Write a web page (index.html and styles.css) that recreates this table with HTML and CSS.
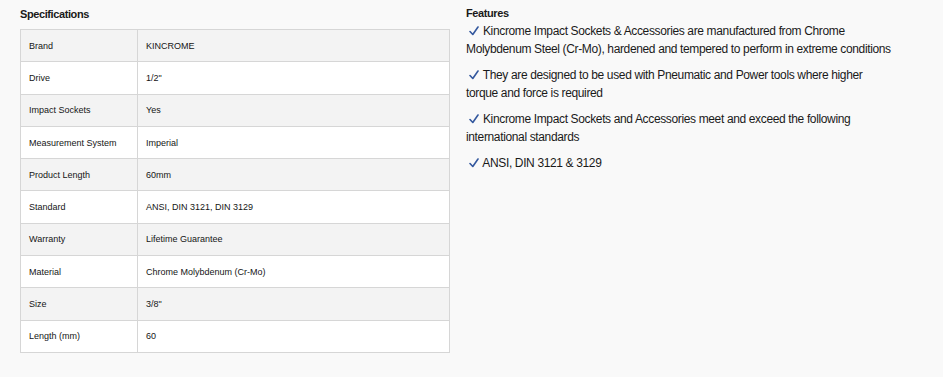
FILE: index.html
```html
<!DOCTYPE html>
<html>
<head>
<meta charset="utf-8">
<link rel="stylesheet" href="styles.css">
</head>
<body>
<div class="page">
  <section class="specs">
    <h2 class="title">Specifications</h2>
    <table class="spec-table">
      <tr><td class="k">Brand</td><td>KINCROME</td></tr>
      <tr><td class="k">Drive</td><td>1/2"</td></tr>
      <tr><td class="k">Impact Sockets</td><td>Yes</td></tr>
      <tr><td class="k">Measurement System</td><td>Imperial</td></tr>
      <tr><td class="k">Product Length</td><td>60mm</td></tr>
      <tr><td class="k">Standard</td><td>ANSI, DIN 3121, DIN 3129</td></tr>
      <tr><td class="k">Warranty</td><td>Lifetime Guarantee</td></tr>
      <tr><td class="k">Material</td><td>Chrome Molybdenum (Cr-Mo)</td></tr>
      <tr><td class="k">Size</td><td>3/8"</td></tr>
      <tr><td class="k">Length (mm)</td><td>60</td></tr>
    </table>
  </section>
  <section class="features">
    <h2 class="title">Features</h2>
    <p><svg class="tick" viewBox="0 0 10 10" width="10" height="10"><path d="M1 5.5 L3.8 8.5 L9 1" fill="none" stroke="#34589e" stroke-width="1.6" stroke-linecap="round" stroke-linejoin="round"/></svg> Kincrome Impact Sockets &amp; Accessories are manufactured from Chrome Molybdenum Steel (Cr-Mo), hardened and tempered to perform in extreme conditions</p>
    <p><svg class="tick" viewBox="0 0 10 10" width="10" height="10"><path d="M1 5.5 L3.8 8.5 L9 1" fill="none" stroke="#34589e" stroke-width="1.6" stroke-linecap="round" stroke-linejoin="round"/></svg> They are designed to be used with Pneumatic and Power tools where higher torque and force is required</p>
    <p><svg class="tick" viewBox="0 0 10 10" width="10" height="10"><path d="M1 5.5 L3.8 8.5 L9 1" fill="none" stroke="#34589e" stroke-width="1.6" stroke-linecap="round" stroke-linejoin="round"/></svg> Kincrome Impact Sockets and Accessories meet and exceed the following international standards</p>
    <p><svg class="tick" viewBox="0 0 10 10" width="10" height="10"><path d="M1 5.5 L3.8 8.5 L9 1" fill="none" stroke="#34589e" stroke-width="1.6" stroke-linecap="round" stroke-linejoin="round"/></svg> ANSI, DIN 3121 &amp; 3129</p>
  </section>
</div>
</body>
</html>
```

FILE: styles.css
```css
html, body {
  margin: 0;
  padding: 0;
  background: #f9f9f9;
  color: #1a1a1a;
  font-family: "Liberation Sans", Arial, sans-serif;
}
.page {
  display: grid;
  grid-template-columns: 430px 429px;
  column-gap: 16px;
  padding: 0 20px;
}
.title {
  font-size: 11px;
  font-weight: bold;
  margin: 0;
  line-height: 14px;
  letter-spacing: -0.4px;
}
.specs .title {
  padding-top: 7px;
  margin-bottom: 8px;
}
.spec-table {
  width: 430px;
  border-collapse: collapse;
  border: 1px solid #d6d6d6;
  font-size: 9px;
  background: #fff;
  color: #151515;
}
.spec-table td {
  height: 31.3px;
  padding: 0 8px;
  border-top: 1px solid #d6d6d6;
  border-bottom: 1px solid #d6d6d6;
  vertical-align: middle;
}
.spec-table td.k {
  width: 100px;
  border-right: 1px solid #d6d6d6;
}
.spec-table tr:nth-child(odd) td {
  background: #f3f3f3;
}
.features .title {
  padding-top: 6px;
  margin-bottom: 2px;
}
.features p {
  margin: 0 0 8px;
  font-size: 12px;
  line-height: 18px;
  letter-spacing: -0.36px;
}
.tick {
  display: inline-block;
  vertical-align: -1px;
  margin-left: 3px;
  margin-right: 1px;
}
```
